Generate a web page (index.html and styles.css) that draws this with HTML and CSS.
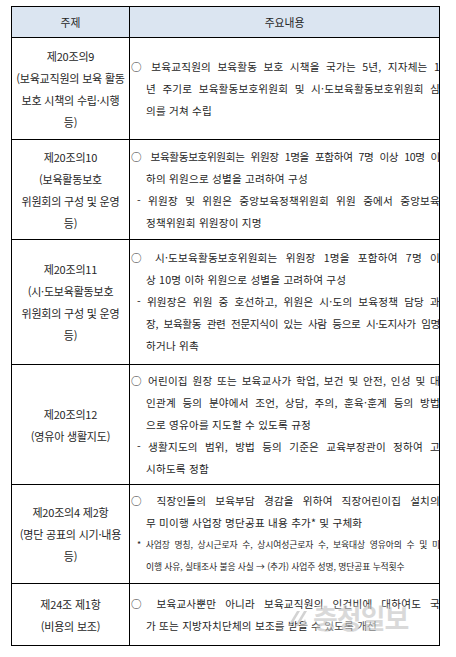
FILE: index.html
```html
<!DOCTYPE html>
<html lang="ko">
<head>
<meta charset="utf-8">
<link rel="stylesheet" href="styles.css">
</head>
<body>
<div class="page">
  <div class="tbl">
    <div class="c hd">주제</div>
    <div class="c hd">주요내용</div>

    <div class="c lc"><div>제20조의9</div><div>(보육교직원의 보육 활동</div><div>보호 시책의 수립·시행</div><div>등)</div></div>
    <div class="c rc">
      <div class="ln o">○ 보육교직원의 보육활동 보호 시책을 국가는 5년, 지자체는 1</div>
      <div class="ln in">년 주기로 보육활동보호위원회 및 시·도보육활동보호위원회 심</div>
      <div class="ln in end">의를 거쳐 수립</div>
    </div>

    <div class="c lc"><div>제20조의10</div><div>(보육활동보호</div><div>위원회의 구성 및 운영</div><div>등)</div></div>
    <div class="c rc">
      <div class="ln o tight">○ 보육활동보호위원회는 위원장 1명을 포함하여 7명 이상 10명 이</div>
      <div class="ln in end">하의 위원으로 성별을 고려하여 구성</div>
      <div class="ln d">- 위원장 및 위원은 중앙보육정책위원회 위원 중에서 중앙보육</div>
      <div class="ln in end">정책위원회 위원장이 지명</div>
    </div>

    <div class="c lc"><div>제20조의11</div><div>(시·도보육활동보호</div><div>위원회의 구성 및 운영</div><div>등)</div></div>
    <div class="c rc">
      <div class="ln o">○ 시·도보육활동보호위원회는 위원장 1명을 포함하여 7명 이</div>
      <div class="ln in end">상 10명 이하 위원으로 성별을 고려하여 구성</div>
      <div class="ln d">- 위원장은 위원 중 호선하고, 위원은 시·도의 보육정책 담당 과</div>
      <div class="ln in tight">장, 보육활동 관련 전문지식이 있는 사람 등으로 시·도지사가 임명</div>
      <div class="ln in end">하거나 위촉</div>
    </div>

    <div class="c lc"><div>제20조의12</div><div>(영유아 생활지도)</div></div>
    <div class="c rc">
      <div class="ln o">○ 어린이집 원장 또는 보육교사가 학업, 보건 및 안전, 인성 및 대</div>
      <div class="ln in">인관계 등의 분야에서 조언, 상담, 주의, 훈육·훈계 등의 방법</div>
      <div class="ln in end">으로 영유아를 지도할 수 있도록 규정</div>
      <div class="ln d">- 생활지도의 범위, 방법 등의 기준은 교육부장관이 정하여 고</div>
      <div class="ln in end">시하도록 정함</div>
    </div>

    <div class="c lc"><div>제20조의4 제2항</div><div>(명단 공표의 시기·내용</div><div>등)</div></div>
    <div class="c rc">
      <div class="ln o">○ 직장인들의 보육부담 경감을 위하여 직장어린이집 설치의</div>
      <div class="ln in end">무 미이행 사업장 명단공표 내용 추가* 및 구체화</div>
      <div class="ln d sm">* 사업장 명칭, 상시근로자 수, 상시여성근로자 수, 보육대상 영유아의 수 및 미</div>
      <div class="ln in end sm">이행 사유, 실태조사 불응 사실 → (추가) 사업주 성명, 명단공표 누적횟수</div>
    </div>

    <div class="c lc"><div>제24조 제1항</div><div>(비용의 보조)</div></div>
    <div class="c rc">
      <div class="ln o">○ 보육교사뿐만 아니라 보육교직원의 인건비에 대하여도 국</div>
      <div class="ln in end">가 또는 지방자치단체의 보조를 받을 수 있도록 개선</div>
    </div>
  </div>

  <div class="wm">
    <svg class="wm-logo" width="24" height="20" viewBox="0 0 24 20">
      <path d="M2 18 L11 3 L14 3 L5 18 Z" fill="#bdbdbd"/>
      <path d="M9 18 L18 3 L21 3 L12 18 Z" fill="#bdbdbd"/>
      <path d="M14 18 L19 11 L22 18 Z" fill="#cccccc"/>
    </svg>
    <span class="wm-text">충청일보</span>
  </div>
</div>
</body>
</html>
```

FILE: styles.css
```css
html, body {
  margin: 0;
  padding: 0;
  background: #ffffff;
}

body {
  font-family: "Noto Sans CJK KR", "Noto Sans", sans-serif;
  color: #262626;
}

.page {
  position: relative;
  width: 456px;
  height: 657px;
  padding: 6px 0 0 11px;
  box-sizing: border-box;
}

.tbl {
  display: grid;
  grid-template-columns: 118px 310px;
  grid-template-rows: 31px 102px 100px 125px 120px 99px 62px;
  width: 428px;
  border-top: 1px solid #000;
  border-left: 1px solid #000;
}

.c {
  box-sizing: border-box;
  border-right: 1px solid #000;
  border-bottom: 1px solid #000;
  display: flex;
  flex-direction: column;
  justify-content: center;
  line-height: 22px;
  min-width: 0;
}

.hd {
  background: #dbe5f1;
  align-items: center;
  font-size: 10.8px;
}

.lc {
  align-items: center;
  text-align: center;
  font-size: 11px;
  letter-spacing: -0.2px;
}

.lc > div {
  white-space: nowrap;
}

.rc {
  font-size: 10.6px;
  letter-spacing: 0.2px;
}

.ln {
  text-align: justify;
  text-align-last: justify;
  margin-right: -1px;
}

.ln.end {
  text-align-last: left;
}

.ln.tight {
  letter-spacing: -0.35px;
}

.o {
  margin-left: 1px;
}

.d {
  margin-left: 7px;
}

.in {
  margin-left: 16px;
}

.sm {
  font-size: 8.8px;
  letter-spacing: -0.1px;
}

.wm {
  position: absolute;
  left: 286px;
  top: 602px;
  display: flex;
  align-items: center;
  gap: 3px;
  opacity: 0.65;
}

.wm-text {
  font-size: 27px;
  font-weight: 700;
  line-height: 32px;
  letter-spacing: -1px;
  color: rgba(180, 180, 180, 0.75);
  text-shadow: 0 0 3px #ffffff, 0 0 6px #ffffff;
}
```
